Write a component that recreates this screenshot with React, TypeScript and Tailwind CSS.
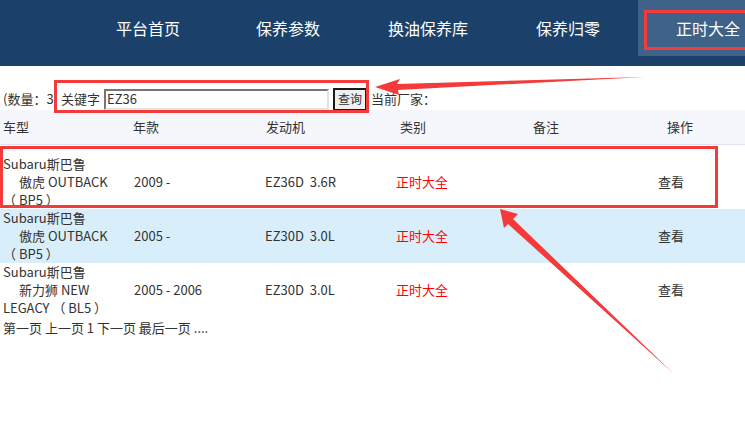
import React from "react";

const navItems = ["平台首页", "保养参数", "换油保养库", "保养归零"];

type Row = { l1: string; l2: string; l3: string; year: string; engine: string; bg: string; pt: string };

const rows: Row[] = [
  { l1: "Subaru斯巴鲁", l2: "傲虎 OUTBACK", l3: "（ BP5 ）", year: "2009 -", engine: "EZ36D\u00a0\u00a03.6R", bg: "bg-white", pt: "pt-[10px]" },
  { l1: "Subaru斯巴鲁", l2: "傲虎 OUTBACK", l3: "（ BP5 ）", year: "2005 -", engine: "EZ30D\u00a0\u00a03.0L", bg: "bg-[#d8eefb]", pt: "pt-0" },
  { l1: "Subaru斯巴鲁", l2: "新力狮 NEW", l3: "LEGACY （ BL5 ）", year: "2005 - 2006", engine: "EZ30D\u00a0\u00a03.0L", bg: "bg-white", pt: "pt-0" },
];

export default function App() {
  return (
    <div className="relative w-[745px] h-[428px] overflow-hidden bg-white font-['Microsoft_YaHei','Noto_Sans_CJK_SC',sans-serif] text-[13px] leading-[18px] text-[#333]">
      <nav className="flex h-[66px] bg-[#1b416a] pl-[78px]">
        {navItems.map((n) => (
          <div key={n} className="flex h-[56px] w-[140px] shrink-0 items-center justify-center text-[16px] text-white">
            {n}
          </div>
        ))}
        <div className="relative flex h-[56px] w-[140px] shrink-0 items-center justify-center bg-[#3e6288] text-[16px] text-white">
          正时大全
          <div className="absolute left-[6px] top-[10px] h-[40px] w-[110px] border-[3px] border-[#f43a3a]" />
        </div>
      </nav>

      <div className="mt-[22px] flex h-[22px] items-center pl-[3px]">
        <span>(数量：3)</span>
        <div className="relative ml-[3px] flex items-center">
          <span>关键字</span>
          <div className="ml-[4px] flex h-[21px] w-[225px] items-center border-2 border-b-[#e3e3e3] border-l-[#767676] border-r-[#e3e3e3] border-t-[#767676] bg-white pl-[1px] text-[13px]">
            EZ36
          </div>
          <div className="ml-[4px] flex h-[23px] w-[34px] items-center justify-center border-2 border-[#1a1a1a] bg-[#efefef] text-[12px]">
            查询
          </div>
          <div className="absolute -bottom-[2px] -left-[7px] -right-[2px] -top-[8px] border-[3px] border-[#f43a3a]" />
        </div>
        <span className="ml-[4px]">当前厂家：</span>
      </div>

      <div className="flex h-[35px] items-center border-b border-[#dfe4ee] bg-[#f6f7fd]">
        <div className="w-[133px] pl-[3px]">车型</div>
        <div className="w-[133px]">年款</div>
        <div className="w-[134px]">发动机</div>
        <div className="w-[133px]">类别</div>
        <div className="w-[134px]">备注</div>
        <div>操作</div>
      </div>

      {rows.map((r, i) => (
        <div key={i} className={`relative flex items-center ${r.bg} ${r.pt}`}>
          <div className="w-[134px] pl-[3px]">
            <div>{r.l1}</div>
            <div className="pl-[16px]">{r.l2}</div>
            <div>{r.l3}</div>
          </div>
          <div className="w-[131px]">{r.year}</div>
          <div className="w-[131px] whitespace-pre">{r.engine}</div>
          <div className="w-[131px] text-[#ff0000]">正时大全</div>
          <div className="w-[131px]" />
          <div>查看</div>
          {i === 0 && (
            <div className="absolute left-0 top-[1px] h-[62px] w-[718px] border-[3px] border-[#f43a3a]" />
          )}
        </div>
      ))}

      <div className="mt-[2px] pl-[3px]">第一页 上一页 1 下一页 最后一页 ....</div>

      <svg className="pointer-events-none absolute left-0 top-0" width="745" height="428" viewBox="0 0 745 428">
        <polygon points="375,87 400,79 397,84 645,77 398,90 399,95" fill="#f43a3a" />
        <polygon points="500,209 518,214 513,219 674,374 508,224 504,228" fill="#f43a3a" />
      </svg>
    </div>
  );
}
